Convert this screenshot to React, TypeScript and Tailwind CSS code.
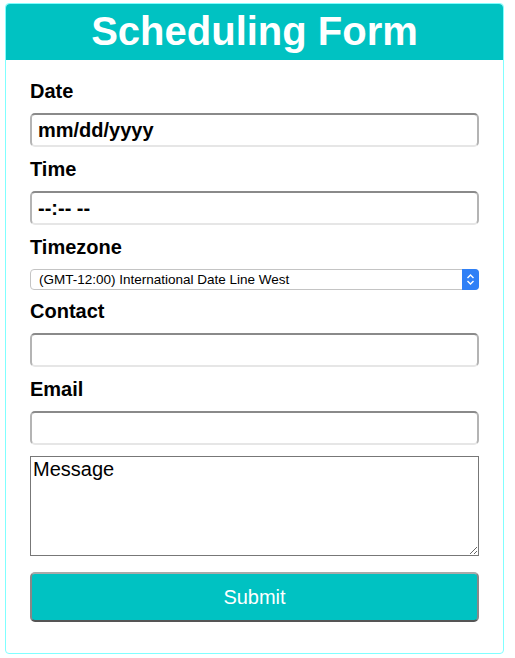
const inputCls =
  "block w-full h-[34px] rounded-[5px] border-2 border-t-[#8a8a8a] border-x-[#b4b4b4] border-b-[#e6e6e6] bg-white px-[6px] text-[20px] font-bold text-black outline-none"

const Label = ({ text }: { text: string }) => (
  <div className="h-[24px] leading-[24px] text-[20px] font-bold text-black">{text}</div>
)

const App = () => {
  return (
    <div className="font-['Liberation_Sans',Arial,sans-serif] bg-white min-h-[658px] pt-[3px]">
      <div className="ml-[5px] w-[499px] border border-[#80ffff] rounded-[4px]">
        <div className="h-[56px] bg-[#00c2c2] rounded-t-[4px] flex items-center justify-center">
          <h1 className="text-[40px] font-bold text-white leading-none -mt-[2px]">Scheduling Form</h1>
        </div>

        <form className="px-[24px] pt-[19px] pb-[31px]" onSubmit={(e) => e.preventDefault()}>
          <Label text="Date" />
          <div className={inputCls + " mt-[10px] leading-[30px]"}>mm/dd/yyyy</div>

          <div className="mt-[10px]">
            <Label text="Time" />
          </div>
          <div className={inputCls + " mt-[10px] leading-[30px]"}>--:-- --</div>

          <div className="mt-[10px]">
            <Label text="Timezone" />
          </div>
          <div className="mt-[10px] h-[21px] flex items-stretch rounded-[4px] border border-[#c4c4c4] bg-white">
            <span className="flex-1 pl-[8px] text-[13.5px] leading-[19px] text-black">
              (GMT-12:00) International Date Line West
            </span>
            <span className="w-[17px] -my-px -mr-px rounded-r-[4px] bg-[#2f80f6] flex items-center justify-center">
              <svg width="9" height="13" viewBox="0 0 9 13" fill="none" stroke="white" strokeWidth="1.4">
                <path d="M1.5 5 L4.5 2 L7.5 5" />
                <path d="M1.5 8 L4.5 11 L7.5 8" />
              </svg>
            </span>
          </div>

          <div className="mt-[9px]">
            <Label text="Contact" />
          </div>
          <input className={inputCls + " mt-[10px]"} type="text" />

          <div className="mt-[10px]">
            <Label text="Email" />
          </div>
          <input className={inputCls + " mt-[10px]"} type="email" />

          <textarea
            className="mt-[11px] block w-full h-[100px] border border-[#777] bg-white px-[2px] py-0 text-[20px] leading-[24px] text-black outline-none placeholder:text-black"
            placeholder="Message"
          />

          <button
            type="submit"
            className="mt-[16px] block w-full h-[50px] rounded-[5px] border-2 border-t-[#aaaaaa] border-x-[#888888] border-b-[#555555] bg-[#00c2c2] text-[20px] text-white"
          >
            Submit
          </button>
        </form>
      </div>
    </div>
  )
}

export default App
